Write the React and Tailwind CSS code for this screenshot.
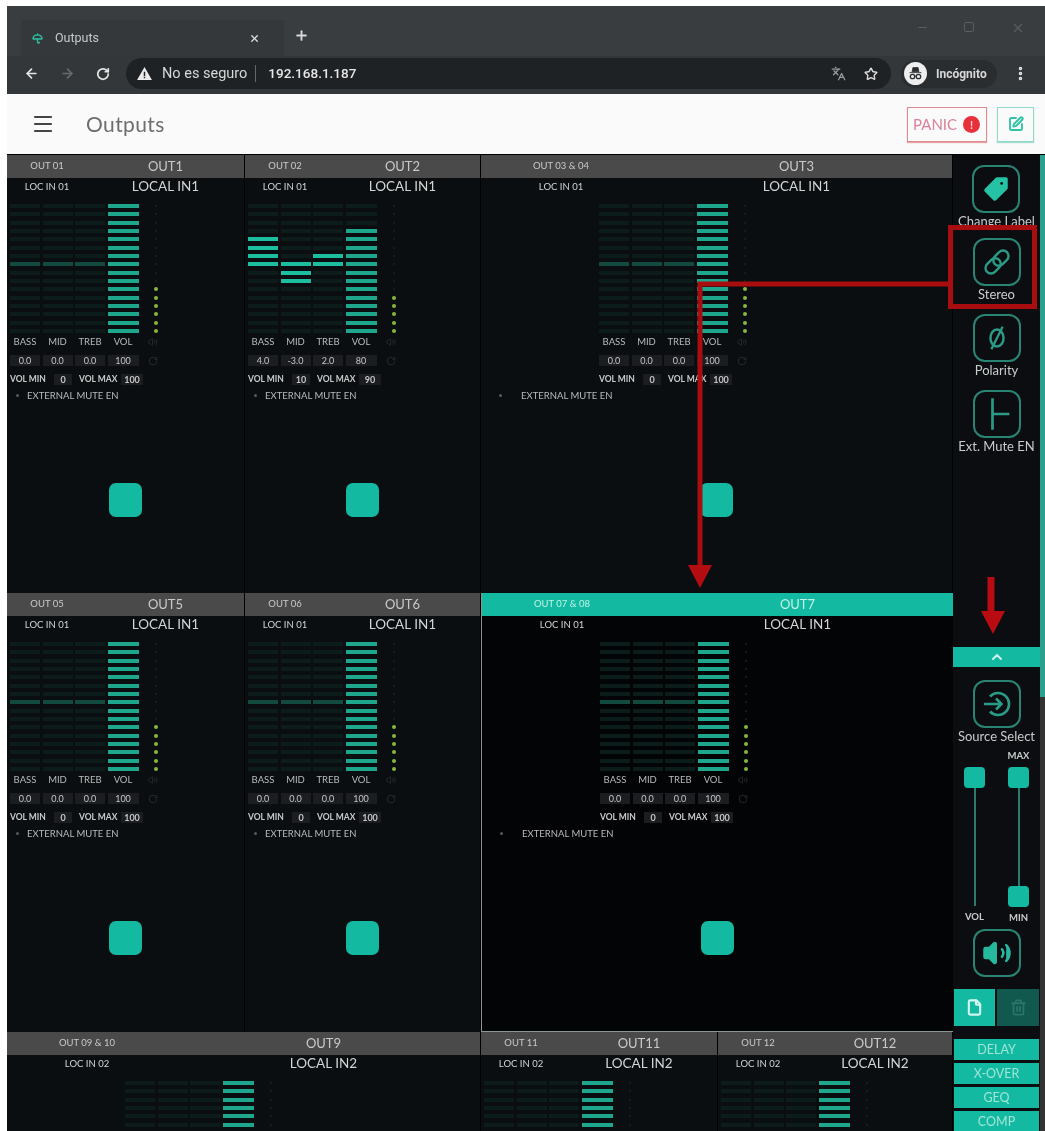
import React from "react";
import { ArrowLeft, ArrowRight, RotateCw, Star, Languages, Menu, X, Plus, Minus, Square, ChevronUp, Tag, Volume2, File, Trash2, SquarePen, EllipsisVertical, Umbrella } from "lucide-react";

const FONT = "font-['Lato','Noto_Sans',sans-serif]";
const STRIPES = Array.from({ length: 16 }, (_, i) => i);

function eqLit(i, v) {
  if (v > 0) return i >= 8 - v && i <= 7;
  if (v < 0) return i >= 7 && i <= 7 - v - 1;
  return false;
}

function EqColumn({ value }) {
  const v = Math.round(value);
  return (
    <div className="flex w-[30px] flex-col gap-[4.35px]">
      {STRIPES.map((i) => {
        const lit = v !== 0 && eqLit(i, v);
        return <div key={i} className={lit ? "h-[4px] bg-[#1dbd9f]" : i === 7 ? "h-[4px] bg-[#124a40]" : "h-[4px] bg-[#0b1c1b]"} />;
      })}
    </div>
  );
}

function VolColumn({ value }) {
  const first = value === 100 ? 0 : 3;
  return (
    <div className="flex w-[31px] flex-col gap-[4.35px]">
      {STRIPES.map((i) => (
        <div key={i} className={i >= first ? "h-[4px] bg-[#1fa78d]" : "h-[4px] bg-[#0b1c1b]"} />
      ))}
    </div>
  );
}

function Meter({ lit }) {
  return (
    <div className="ml-[12px] flex w-[6px] flex-col items-center gap-[4.35px]">
      {STRIPES.map((i) => (
        <div key={i} className="flex h-[4px] w-[4px] items-center justify-center">
          <div className={i >= 16 - lit ? "h-[4px] w-[4px] rounded-full bg-[#86b83c]" : "h-[2px] w-[2px] rounded-full bg-[#1f211c]"} />
        </div>
      ))}
    </div>
  );
}

function Value({ children, w = "w-[30px]" }) {
  return <div className={`${w} flex h-[11px] items-center justify-center bg-[#1c1d20] text-[9px] leading-none text-[#c4c6c6]`}>{children}</div>;
}

function Channel({ d, className = "" }) {
  const { wide, selected, short } = d;
  return (
    <div className={`relative flex min-h-0 flex-col overflow-hidden ${selected ? "border-b border-l border-[#8b9693] bg-[#030405]" : "border-r border-black bg-[#0b0e11]"} ${className}`}>
      <div className={`flex h-[23px] shrink-0 items-center ${selected ? "bg-[#13b9a0] text-[#bff3e8]" : "bg-[#4a4a4a] text-[#c9c9c9]"}`}>
        <div className={`${wide ? "w-[160px]" : "w-[80px]"} text-center text-[9.5px]`}>{d.out}</div>
        <div className="flex-1 text-center text-[13px] leading-none">{d.title}</div>
      </div>
      <div className="flex h-[18px] shrink-0 items-center text-[#d3d4d4]">
        <div className={`${wide ? "w-[160px]" : "w-[80px]"} text-center text-[9.5px]`}>{d.loc}</div>
        <div className="flex-1 text-center text-[13.5px] leading-none">{d.input}</div>
      </div>
      <div className={`${wide ? "ml-[118px]" : "ml-[3px]"} mt-[8px] w-[150px]`}>
        <div className="flex items-start gap-[2.5px]">
          <EqColumn value={d.bass} />
          <EqColumn value={d.mid} />
          <EqColumn value={d.treb} />
          <VolColumn value={d.vol} />
          <Meter lit={d.lit} />
        </div>
        {!short && (
          <>
            <div className="mt-[3px] flex h-[12px] items-center gap-[2.5px] text-center text-[9.5px] leading-none text-[#b8baba]">
              <div className="w-[30px]">BASS</div>
              <div className="w-[30px]">MID</div>
              <div className="w-[30px]">TREB</div>
              <div className="w-[31px]">VOL</div>
              <Volume2 className="ml-[7px] h-[10px] w-[10px] text-[#2c2e2f]" />
            </div>
            <div className="mt-[7px] flex items-center gap-[2.5px]">
              <Value>{d.bass === 0 ? "0.0" : d.bass.toFixed(1)}</Value>
              <Value>{d.mid === 0 ? "0.0" : d.mid.toFixed(1)}</Value>
              <Value>{d.treb === 0 ? "0.0" : d.treb.toFixed(1)}</Value>
              <Value w="w-[31px]">{d.vol}</Value>
              <RotateCw className="ml-[7px] h-[10px] w-[10px] text-[#2c2e2f]" />
            </div>
            <div className="mt-[7.5px] flex h-[12px] items-center whitespace-nowrap text-[8.5px] font-bold leading-none text-[#c8caca]">
              <div className="w-[44px]">VOL MIN</div>
              <Value w="w-[18px]">{d.min}</Value>
              <div className="ml-[7px] w-[42px]">VOL MAX</div>
              <Value w="w-[22px]">{d.max}</Value>
            </div>
          </>
        )}
      </div>
      {!short && (
        <>
          <div className={`mt-[3px] flex h-[14px] items-center text-[9.5px] leading-none text-[#b8baba] ${wide ? "pl-[18px]" : "pl-[9px]"}`}>
            <div className={`h-[3px] w-[3px] rounded-full bg-[#55595a] ${wide ? "mr-[19px]" : "mr-[8px]"}`} />
            EXTERNAL MUTE EN
          </div>
          <div className="mt-[80px] flex justify-center">
            <div className="h-[34px] w-[33px] rounded-[7px] bg-[#13b9a0]" />
          </div>
        </>
      )}
    </div>
  );
}

function SideButton({ children }) {
  return <div className="flex h-[48px] w-[48px] items-center justify-center rounded-[12px] border-2 border-[#2a8474] text-[#26b89e]">{children}</div>;
}

function SideItem({ label, children, className = "" }) {
  return (
    <div className={`flex flex-col items-center ${className}`}>
      <SideButton>{children}</SideButton>
      <div className="mt-[1px] h-[15px] whitespace-nowrap text-center text-[13px] leading-[15px] text-[#c8cccb]">{label}</div>
    </div>
  );
}

function Thumb() {
  return <div className="h-[21px] w-[21px] rounded-[4px] bg-[#13b9a0]" />;
}

function SideBar() {
  return (
    <div className={`flex h-full w-[87px] flex-col bg-[#0b0d10] ${FONT}`}>
      <div className="flex flex-col items-center pt-[10px]">
        <SideItem label="Change Label" className="h-[73px]">
          <Tag className="h-[30px] w-[30px] rotate-[90deg] fill-[#26c2a6] text-[#0b0d10]" strokeWidth={1.2} />
        </SideItem>
        <SideItem label="Stereo" className="h-[76px]">
          <svg viewBox="0 0 32 32" className="h-[32px] w-[32px]" fill="none" stroke="#2b9a86" strokeWidth="2.4">
            <g transform="rotate(-45 16 16)">
              <rect x="2" y="10.5" width="17" height="11" rx="5.5" />
              <rect x="13" y="10.5" width="17" height="11" rx="5.5" />
            </g>
          </svg>
        </SideItem>
        <SideItem label="Polarity" className="h-[76px]">
          <svg viewBox="0 0 32 32" className="h-[30px] w-[30px]" fill="none" stroke="#2b9a86" strokeWidth="2.6">
            <ellipse cx="16" cy="16" rx="7" ry="9" />
            <path d="M22 4 10 28" />
          </svg>
        </SideItem>
        <SideItem label="Ext. Mute EN">
          <svg viewBox="0 0 32 32" className="h-[36px] w-[36px]" fill="none" stroke="#2b9a86" strokeWidth="2.4">
            <path d="M12 2V30M12 16H27" />
          </svg>
        </SideItem>
      </div>
      <div className="mt-[193px] flex h-[20px] shrink-0 items-center justify-center bg-[#13b9a0]">
        <ChevronUp className="h-[16px] w-[16px] text-[#c9f5ec]" strokeWidth={3} />
      </div>
      <div className="mt-[13px] flex flex-col items-center">
        <SideItem label="Source Select">
          <svg viewBox="0 0 32 32" className="h-[32px] w-[32px]" fill="none" stroke="#2b9a86" strokeWidth="2.6">
            <path d="M9 8.5A11 11 0 1 1 9 23.5" />
            <path d="M3 16H20M15 10.5 20.5 16 15 21.5" />
          </svg>
        </SideItem>
      </div>
      <div className="mt-[2px] flex h-[183px] shrink-0 justify-between px-[11px] text-[9.5px] leading-none text-[#c8cccb]">
        <div className="flex w-[21px] flex-col items-center pt-[21px]">
          <Thumb />
          <div className="h-[118px] w-[2px] bg-[#2b7a6c]" />
          <div className="mt-[6px] font-bold">VOL</div>
        </div>
        <div className="flex w-[21px] flex-col items-center">
          <div className="mb-[2px] flex h-[19px] items-center font-bold">MAX</div>
          <Thumb />
          <div className="h-[98px] w-[2px] bg-[#2b7a6c]" />
          <Thumb />
          <div className="mt-[6px] font-bold">MIN</div>
        </div>
      </div>
      <div className="flex justify-center">
        <SideButton>
          <Volume2 className="h-[30px] w-[30px] fill-[#26b89e] text-[#26b89e]" strokeWidth={2} />
        </SideButton>
      </div>
      <div className="mt-[12px] flex h-[37px] shrink-0 gap-[2px] pl-[1px]">
        <div className="flex w-[41px] items-center justify-center bg-[#13b9a0]">
          <File className="h-[17px] w-[17px] text-[#d2f7ef]" strokeWidth={3} />
        </div>
        <div className="flex w-[42px] items-center justify-center bg-[#11584e]">
          <Trash2 className="h-[17px] w-[17px] text-[#2a7568]" strokeWidth={2.5} />
        </div>
      </div>
      <div className="mt-[13px] flex flex-col gap-[3px] pl-[1px] pr-[1px] text-center text-[12.5px] leading-[21px] text-[#9fe6d8]">
        <div className="h-[21px] bg-[#13b9a0]">DELAY</div>
        <div className="h-[21px] bg-[#13b9a0]">X-OVER</div>
        <div className="h-[21px] bg-[#13b9a0]">GEQ</div>
        <div className="h-[22px] bg-[#13b9a0]">COMP</div>
      </div>
    </div>
  );
}

const base = { bass: 0, mid: 0, treb: 0, vol: 100, min: 0, max: 100, lit: 6, loc: "LOC IN 01", input: "LOCAL IN1" };
const loc2 = { loc: "LOC IN 02", input: "LOCAL IN2", short: true };

function Annotations() {
  return (
    <svg className="pointer-events-none absolute left-0 top-0" width="1045" height="1131" viewBox="0 0 1045 1131" fill="none">
      <rect x="950.5" y="227.5" width="84" height="79" stroke="#a80d10" strokeWidth="5" />
      <path d="M948 284H700V566" stroke="#a80d10" strokeWidth="5" />
      <path d="M688 565H712L700 588Z" fill="#b30d12" />
      <path d="M991 577V613" stroke="#b80c12" strokeWidth="7" />
      <path d="M981 611H1005L993 634Z" fill="#b80c12" />
    </svg>
  );
}

export default function App() {
  return (
    <div className="relative h-[1131px] w-[1045px] overflow-hidden bg-white pl-[7px] pt-[6px] blur-[0.5px]">
      <div className="font-['Roboto',sans-serif]">
        <div className="flex h-[50px] bg-[#3a3d3f] pt-[14px]">
          <div className="ml-[14px] flex h-[36px] w-[263px] items-center bg-[#35383a] pl-[11px] text-[#c6c8c9]">
            <Umbrella className="h-[11px] w-[11px] text-[#2dbfa3]" strokeWidth={3} />
            <span className="ml-[12px] flex-1 text-[12.5px]">Outputs</span>
            <X className="mr-[24px] h-[11px] w-[11px] text-[#d6d6d6]" strokeWidth={3} />
          </div>
          <Plus className="ml-[10px] mt-[8px] h-[15px] w-[15px] text-[#d8d8d8]" strokeWidth={3} />
          <div className="ml-auto flex h-[36px] items-start pt-[1px] text-[#5b5e60]">
            <Minus className="h-[13px] w-[13px]" />
            <Square className="ml-[34px] h-[12px] w-[12px]" />
            <X className="ml-[36px] mr-[20px] h-[14px] w-[14px]" />
          </div>
        </div>
        <div className="flex h-[38px] items-center bg-[#34373a] pb-[3px] pl-[17px] text-[#e6e6e6]">
          <ArrowLeft className="h-[15px] w-[15px]" strokeWidth={2.6} />
          <ArrowRight className="ml-[21px] h-[15px] w-[15px] text-[#686a6c]" strokeWidth={2.6} />
          <RotateCw className="ml-[21px] h-[14px] w-[14px]" strokeWidth={3} />
          <div className="ml-[16px] flex h-[31px] w-[765px] items-center rounded-full bg-[#1f2224] pl-[11px]">
            <svg viewBox="0 0 16 14" className="h-[13px] w-[15px]"><path d="M8 0 16 14H0Z" fill="#ececec" /><path d="M7.2 5h1.6v4.6H7.2zM7.2 10.6h1.6v1.6H7.2z" fill="#222" /></svg>
            <span className="ml-[10px] text-[14.5px] text-[#d6d8d8]">No es seguro</span>
            <div className="ml-[8px] h-[17px] w-[1px] bg-[#666]" />
            <span className="ml-[12px] text-[13.5px] font-medium text-[#e6e6e6]">192.168.1.187</span>
            <Languages className="ml-auto h-[15px] w-[15px] text-[#9a9c9d]" />
            <Star className="ml-[18px] mr-[13px] h-[14px] w-[14px] text-[#dcdcdc]" strokeWidth={2.4} />
          </div>
          <div className="ml-[10px] flex h-[28px] w-[96px] items-center rounded-full bg-[#2a2d30] pl-[3px]">
            <div className="flex h-[23px] w-[23px] items-center justify-center rounded-full bg-[#eeeeee]">
              <svg viewBox="0 0 20 20" className="h-[17px] w-[17px]" fill="none" stroke="#2a2d30"><path d="M3 9h14M6 8l1-5h6l1 5Z" fill="#2a2d30" /><circle cx="6.5" cy="13.5" r="2.6" strokeWidth="1.5" /><circle cx="13.5" cy="13.5" r="2.6" strokeWidth="1.5" /><path d="M9 13h2" /></svg>
            </div>
            <span className="ml-[9px] text-[12px] font-bold text-[#d8d8d8]">Incógnito</span>
          </div>
          <EllipsisVertical className="ml-[15px] h-[17px] w-[17px]" strokeWidth={3} />
        </div>
      </div>

      <div className={`flex h-[60px] items-center bg-[#fafafa] pl-[24px] pr-[11px] ${FONT}`}>
        <Menu className="h-[24px] w-[24px] text-[#444]" strokeWidth={2.2} />
        <span className="ml-[31px] text-[21px] tracking-[0.4px] text-[#6e6e6e]">Outputs</span>
        <div className="ml-auto flex h-[35px] w-[80px] items-center border border-[#dd8a90] pl-[5px] shadow-[0_1px_1px_#e8a0a0]">
          <span className="text-[15px] text-[#d9829a]">PANIC</span>
          <div className="ml-[6px] flex h-[17px] w-[17px] items-center justify-center rounded-full bg-[#e8303a] text-[11px] font-bold leading-none text-[#f5d0d0]">!</div>
        </div>
        <div className="ml-[10px] flex h-[35px] w-[37px] items-center justify-center border border-[#8fd8ca] shadow-[0_1px_1px_#a5ddd2]">
          <SquarePen className="h-[16px] w-[16px] text-[#2fc2a6]" strokeWidth={2.8} />
        </div>
      </div>

      <div className={`flex h-[977px] bg-black pt-[1px] ${FONT}`}>
        <div className="grid h-full w-[946px] grid-cols-[238px_236px_237px_235px] grid-rows-[438px_439px_1fr]">
          <Channel d={{ ...base, out: "OUT 01", title: "OUT1" }} />
          <Channel d={{ ...base, out: "OUT 02", title: "OUT2", bass: 4, mid: -3, treb: 2, vol: 80, min: 10, max: 90, lit: 5 }} />
          <Channel className="col-span-2" d={{ ...base, wide: true, out: "OUT 03 & 04", title: "OUT3" }} />
          <Channel d={{ ...base, out: "OUT 05", title: "OUT5" }} />
          <Channel d={{ ...base, out: "OUT 06", title: "OUT6" }} />
          <Channel className="col-span-2" d={{ ...base, wide: true, selected: true, out: "OUT 07 & 08", title: "OUT7" }} />
          <Channel className="col-span-2" d={{ ...base, ...loc2, wide: true, out: "OUT 09 & 10", title: "OUT9" }} />
          <Channel d={{ ...base, ...loc2, out: "OUT 11", title: "OUT11" }} />
          <Channel d={{ ...base, ...loc2, out: "OUT 12", title: "OUT12" }} />
        </div>
        <SideBar />
        <div className="flex h-full w-[5px] flex-col bg-[#333]">
          <div className="h-[542px] bg-[#2ba08f]" />
        </div>
      </div>
      <Annotations />
    </div>
  );
}
